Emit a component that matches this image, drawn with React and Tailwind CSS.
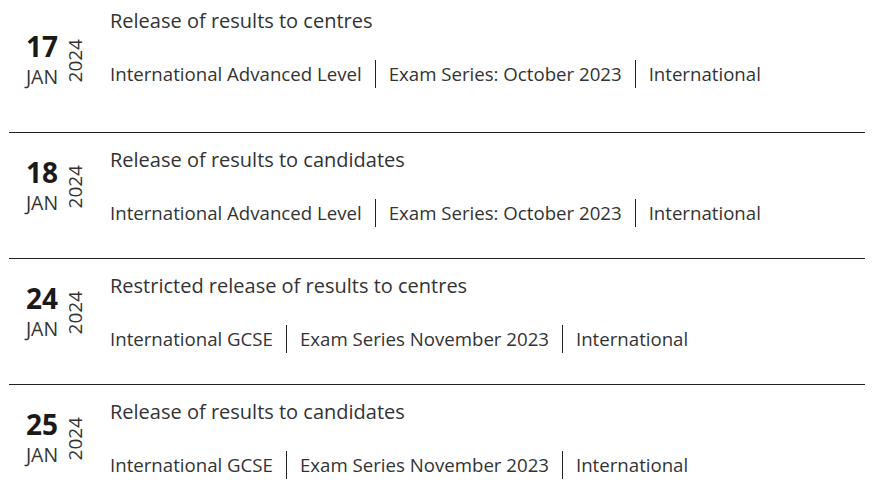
import React from 'react';

const events = [
  {
    day: '17',
    month: 'JAN',
    year: '2024',
    title: 'Release of results to centres',
    tags: ['International Advanced Level', 'Exam Series: October 2023', 'International'],
  },
  {
    day: '18',
    month: 'JAN',
    year: '2024',
    title: 'Release of results to candidates',
    tags: ['International Advanced Level', 'Exam Series: October 2023', 'International'],
  },
  {
    day: '24',
    month: 'JAN',
    year: '2024',
    title: 'Restricted release of results to centres',
    tags: ['International GCSE', 'Exam Series November 2023', 'International'],
  },
  {
    day: '25',
    month: 'JAN',
    year: '2024',
    title: 'Release of results to candidates',
    tags: ['International GCSE', 'Exam Series November 2023', 'International'],
  },
];

const EventRow = ({ item, first }) => {
  return (
    <div className="flex h-[126px] border-b border-[#222]">
      {/* date */}
      <div className="ml-[8px] w-[50px] pt-[22px] flex flex-col items-center">
        <span className="text-[28px] leading-[34px] font-bold text-[#1a1a1a]">{item.day}</span>
        <span className="text-[19.5px] leading-[24px] mt-[2px] text-[#333]">{item.month}</span>
      </div>
      <div className="w-[17px] pt-[32px]">
        <span className="block [writing-mode:vertical-rl] rotate-180 text-[19px] leading-[17px] text-[#333]">
          {item.year}
        </span>
      </div>

      {/* content */}
      <div className={`ml-[26px] ${first ? 'pt-0' : 'pt-[13px]'}`}>
        <h3 className="text-[20px] leading-[28px] text-[#333]">{item.title}</h3>
        <div className="flex items-center mt-[25px] text-[18.65px] leading-[28px] text-[#333]">
          {item.tags.map((tag, i) => (
            <span
              key={i}
              className={i > 0 ? 'border-l border-[#222] pl-[13px] ml-[13px]' : ''}
            >
              {tag}
            </span>
          ))}
        </div>
      </div>
    </div>
  );
};

export default function App() {
  return (
    <div
      className="w-[877px] h-[500px] overflow-hidden bg-white pt-[7px]"
      style={{ fontFamily: '"Open Sans", sans-serif' }}
    >
      <div className="ml-[9px] w-[856px]">
        {events.map((item, index) => (
          <EventRow key={index} item={item} first={index === 0} />
        ))}
      </div>
    </div>
  );
}
